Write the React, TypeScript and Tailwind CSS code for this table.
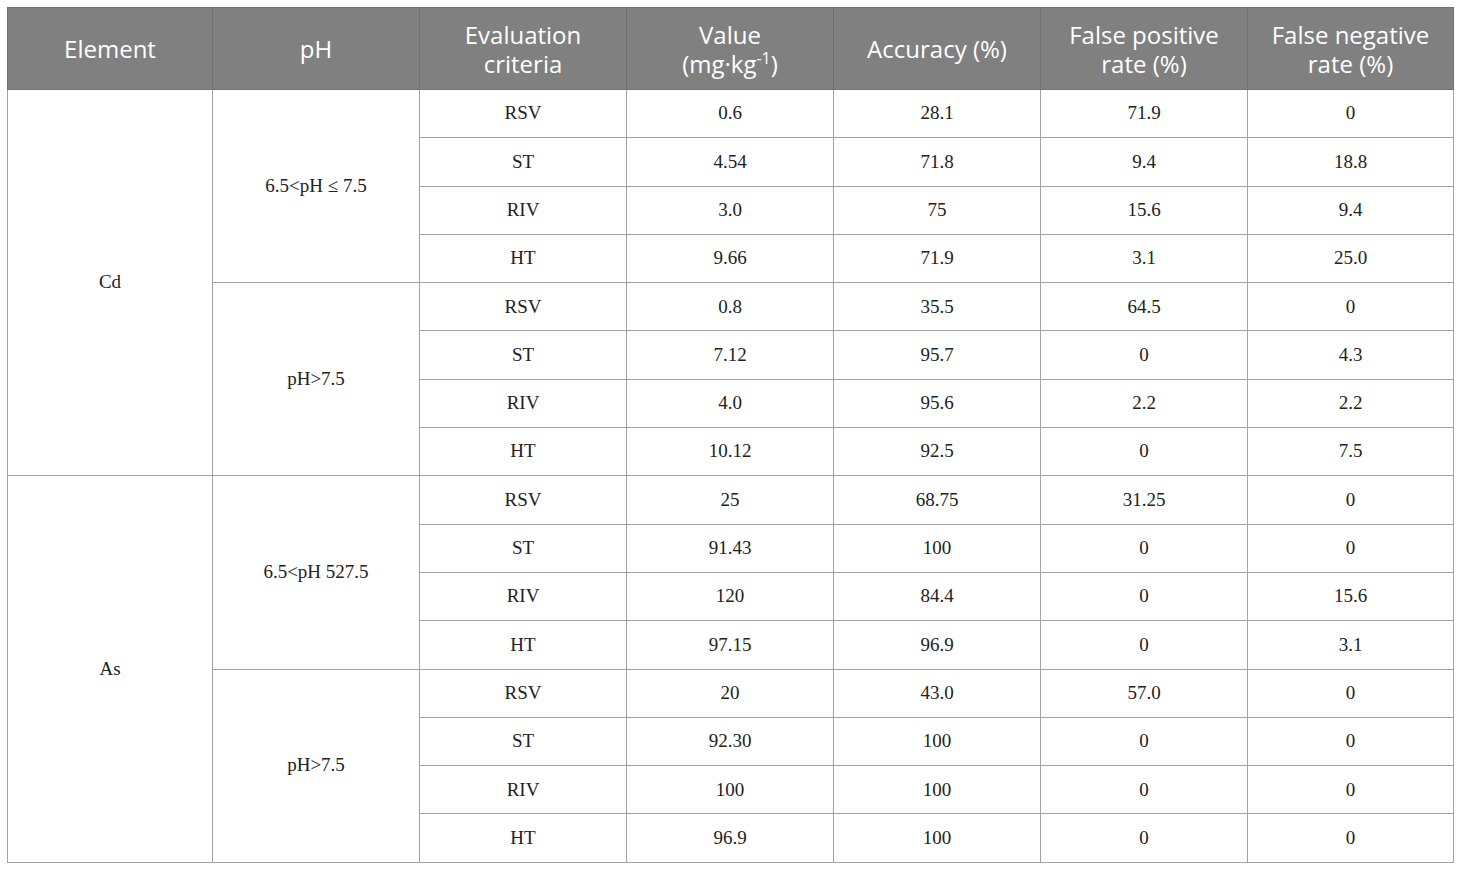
type Row = [string, string, string, string, string];

type Group = {
  element: string;
  blocks: { ph: string; rows: Row[] }[];
};

const groups: Group[] = [
  {
    element: "Cd",
    blocks: [
      {
        ph: "6.5<pH ≤ 7.5",
        rows: [
          ["RSV", "0.6", "28.1", "71.9", "0"],
          ["ST", "4.54", "71.8", "9.4", "18.8"],
          ["RIV", "3.0", "75", "15.6", "9.4"],
          ["HT", "9.66", "71.9", "3.1", "25.0"],
        ],
      },
      {
        ph: "pH>7.5",
        rows: [
          ["RSV", "0.8", "35.5", "64.5", "0"],
          ["ST", "7.12", "95.7", "0", "4.3"],
          ["RIV", "4.0", "95.6", "2.2", "2.2"],
          ["HT", "10.12", "92.5", "0", "7.5"],
        ],
      },
    ],
  },
  {
    element: "As",
    blocks: [
      {
        ph: "6.5<pH 527.5",
        rows: [
          ["RSV", "25", "68.75", "31.25", "0"],
          ["ST", "91.43", "100", "0", "0"],
          ["RIV", "120", "84.4", "0", "15.6"],
          ["HT", "97.15", "96.9", "0", "3.1"],
        ],
      },
      {
        ph: "pH>7.5",
        rows: [
          ["RSV", "20", "43.0", "57.0", "0"],
          ["ST", "92.30", "100", "0", "0"],
          ["RIV", "100", "100", "0", "0"],
          ["HT", "96.9", "100", "0", "0"],
        ],
      },
    ],
  },
];

const th =
  "border border-[#6f706f] px-2 text-center align-middle text-[24px] font-normal leading-[29px] text-white";
const td = "border border-[#a3a3a3] text-center align-middle";

export default function App() {
  return (
    <div className="min-h-[870px] w-[1460px] bg-white pl-[7px] pt-[7px]">
      <table
        className="w-[1446px] table-fixed border-collapse border border-[#a8a8a8] text-[19px] text-[#222]"
        style={{ fontFamily: '"Liberation Serif", "Times New Roman", serif' }}
      >
        <colgroup>
          <col className="w-[205px]" />
          <col className="w-[207px]" />
          <col className="w-[207px]" />
          <col className="w-[207px]" />
          <col className="w-[207px]" />
          <col className="w-[207px]" />
          <col className="w-[206px]" />
        </colgroup>
        <thead>
          <tr
            className="h-[82px] bg-[#7f807f]"
            style={{ fontFamily: '"Open Sans", "Noto Sans", sans-serif' }}
          >
            <th className={th}>Element</th>
            <th className={th}>pH</th>
            <th className={th}>
              Evaluation
              <br />
              criteria
            </th>
            <th className={th}>
              Value
              <br />
              (mg·kg
              <span className="relative -top-[9px] text-[16px] leading-none">-1</span>)
            </th>
            <th className={th}>Accuracy (%)</th>
            <th className={th}>
              False positive
              <br />
              rate (%)
            </th>
            <th className={th}>
              False negative
              <br />
              rate (%)
            </th>
          </tr>
        </thead>
        <tbody>
          {groups.map((g) =>
            g.blocks.map((b, bi) =>
              b.rows.map((r, ri) => (
                <tr key={g.element + bi + ri} className="h-[48.3px]">
                  {bi === 0 && ri === 0 && (
                    <td rowSpan={8} className={td}>
                      {g.element}
                    </td>
                  )}
                  {ri === 0 && (
                    <td rowSpan={4} className={td}>
                      {b.ph}
                    </td>
                  )}
                  {r.map((c, ci) => (
                    <td key={ci} className={td}>
                      {c}
                    </td>
                  ))}
                </tr>
              ))
            )
          )}
        </tbody>
      </table>
    </div>
  );
}
